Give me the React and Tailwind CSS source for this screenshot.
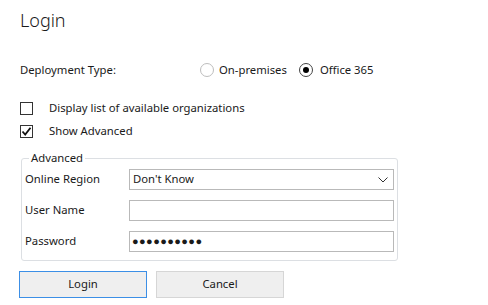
export default function App() {
  return (
    <div
      className="w-[488px] h-[305px] bg-white text-[11.3px] text-[#1a1a1a] relative overflow-hidden"
      style={{ fontFamily: '"Noto Sans", "Open Sans", sans-serif' }}
    >
      <div className="pl-[20px] pt-[8px]">
        <h1 className="text-[18px] leading-[24px] font-light">Login</h1>

        <div className="flex items-center mt-[28px] h-[20px]">
          <span className="w-[180px]">Deployment Type:</span>
          <label className="flex items-center">
            <span className="w-[14px] h-[14px] rounded-full border border-[#bdbdbd]" />
            <span className="ml-[5px]">On-premises</span>
          </label>
          <label className="flex items-center ml-[12px]">
            <span className="w-[14px] h-[14px] rounded-full border border-[#444] flex items-center justify-center">
              <span className="w-[6px] h-[6px] rounded-full bg-black" />
            </span>
            <span className="ml-[7px]">Office 365</span>
          </label>
        </div>

        <div className="flex items-center mt-[18px] h-[20px]">
          <span className="w-[13px] h-[13px] border border-[#333]" />
          <span className="ml-[16px]">Display list of available organizations</span>
        </div>
        <div className="flex items-center mt-[3px] h-[20px]">
          <span className="w-[13px] h-[13px] border border-[#333] flex items-center justify-center">
            <svg width="11" height="11" viewBox="0 0 11 11">
              <path d="M1.5 5.5 L4.2 8.5 L9.5 1.8" fill="none" stroke="#111" strokeWidth="1.8" />
            </svg>
          </span>
          <span className="ml-[16px]">Show Advanced</span>
        </div>

        <fieldset className="mt-[10px] w-[376px] ml-[1px] border border-[#dcdfe3] rounded-[3px] pl-[3px] pr-[3px] pb-[8px]">
          <legend className="ml-[4px] px-[2px] leading-[14px]">Advanced</legend>
          <div className="flex items-center mt-[4px]">
            <span className="w-[104px]">Online Region</span>
            <div className="w-[265px] h-[21px] border border-[#b9b9b9] flex items-center justify-between pl-[3px] pr-[5px]">
              <span>Don't Know</span>
              <svg width="10" height="6" viewBox="0 0 10 6">
                <path d="M0.5 0.5 L5 5 L9.5 0.5" fill="none" stroke="#333" strokeWidth="1" />
              </svg>
            </div>
          </div>
          <div className="flex items-center mt-[10px]">
            <span className="w-[104px]">User Name</span>
            <div className="w-[265px] h-[21px] border border-[#b9b9b9]" />
          </div>
          <div className="flex items-center mt-[10px]">
            <span className="w-[104px]">Password</span>
            <div className="w-[265px] h-[21px] border border-[#b9b9b9] flex items-center pl-[2px] text-[11px] tracking-[0.4px]">
              ●●●●●●●●●●
            </div>
          </div>
        </fieldset>

        <div className="flex mt-[10px] gap-[9px] -ml-[1px]">
          <button className="w-[128px] h-[27px] bg-[#efefef] border border-[#3c8fe6]">Login</button>
          <button className="w-[128px] h-[27px] bg-[#efefef] border border-[#d6d6d6]">Cancel</button>
        </div>
      </div>
    </div>
  );
}
